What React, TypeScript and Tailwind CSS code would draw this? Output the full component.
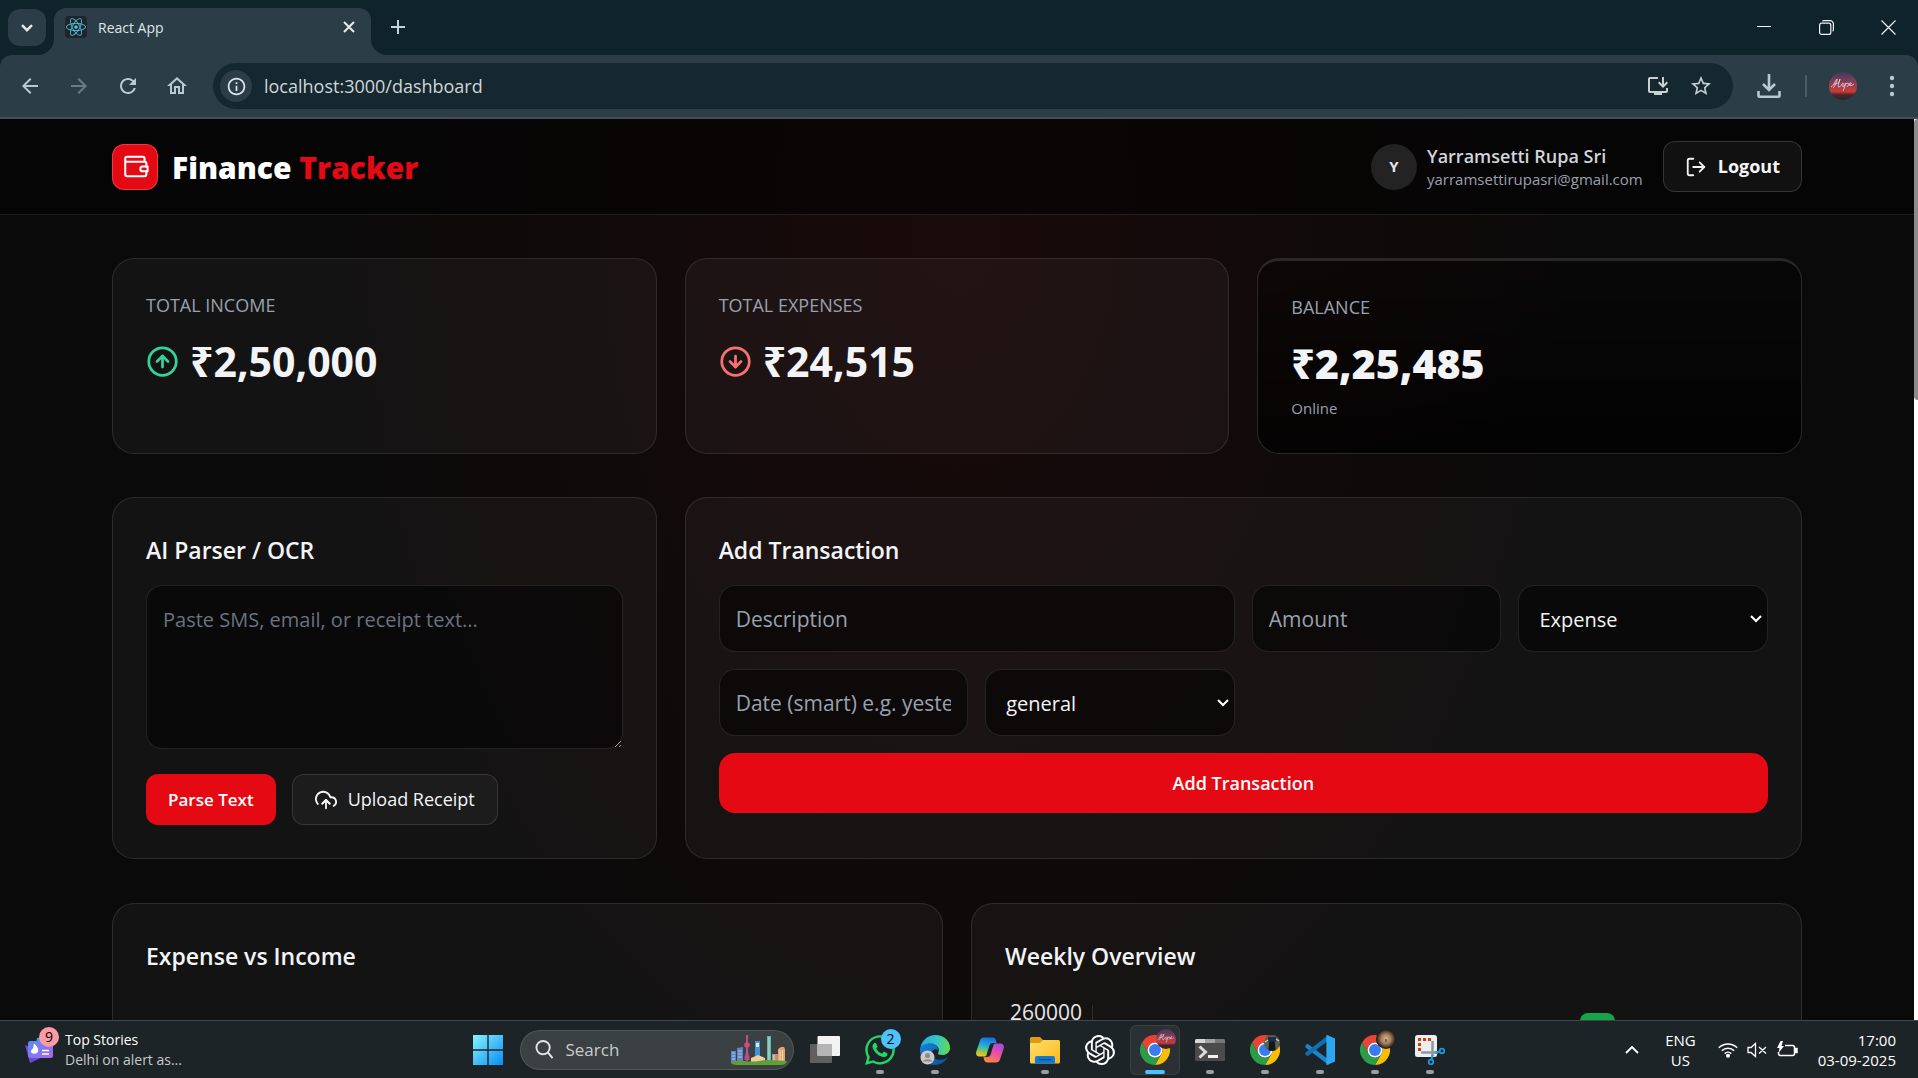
import type { ReactNode } from "react";
import { FiArrowDownCircle, FiArrowUpCircle, FiLogOut, FiUploadCloud } from "react-icons/fi";
import { FaReact, FaWhatsapp } from "react-icons/fa";
import { SiOpenai } from "react-icons/si";
import {
  MdArrowBack,
  MdArrowForward,
  MdOutlineHome,
  MdOutlineInfo,
  MdOutlineInstallDesktop,
  MdRefresh,
  MdStarBorder,
} from "react-icons/md";

/* ---------- Shared pieces ---------- */

function HopeAvatar({ className }: { className: string }) {
  return (
    <svg viewBox="0 0 28 28" className={className} aria-hidden="true">
      <defs>
        <linearGradient id="sunset" x1="0" y1="0" x2="0" y2="1">
          <stop offset="0" stopColor="#41395c" />
          <stop offset="0.4" stopColor="#8c3f57" />
          <stop offset="0.7" stopColor="#c63c38" />
          <stop offset="0.82" stopColor="#4a2328" />
          <stop offset="1" stopColor="#222b33" />
        </linearGradient>
      </defs>
      <circle cx="14" cy="14" r="14" fill="url(#sunset)" />
      <path
        d="M2 15c3-1 5-8 6-8s-3 9-4 9M5 12c3 0 5-1 6-5-1 4-3 8-1 8s3-4 4-4-1 4 0 4 3-4 2-4M17 11c-1 3-2 6-3 8M17 12c2-2 4 0 1 3M20 13c3-1 3-3 1-2s-1 5 4 1"
        fill="none"
        stroke="#f3d9de"
        strokeWidth="0.8"
      />
    </svg>
  );
}

/* ---------- Browser chrome ---------- */

function TabStrip() {
  return (
    <div className="flex h-[55px] shrink-0 items-end bg-[#0f232b]">
      <button
        aria-label="Search tabs"
        className="mb-[9px] ml-2 flex h-[37px] w-[38px] items-center justify-center rounded-xl bg-[#2b3e47] text-[#e3e8ea]"
      >
        <svg viewBox="0 0 12 8" className="h-2 w-3" fill="none" stroke="currentColor" strokeWidth="2.4">
          <path d="M1 1.2l5 5 5-5" />
        </svg>
      </button>
      <div className="relative ml-2 flex h-[47px] w-[317px] items-center rounded-t-xl bg-[#2b3e47] pb-[9px] pl-[11px] pr-3">
        <svg viewBox="0 0 16 16" className="absolute -left-4 bottom-0 size-4">
          <path d="M16 0v16H0A16 16 0 0 0 16 0z" fill="#2b3e47" />
        </svg>
        <svg viewBox="0 0 16 16" className="absolute -right-4 bottom-0 size-4">
          <path d="M0 0v16h16A16 16 0 0 1 0 0z" fill="#2b3e47" />
        </svg>
        <span className="flex size-[22px] items-center justify-center rounded-sm bg-[#20232a]">
          <FaReact className="size-5 text-[#53c1de]" />
        </span>
        <span className="ml-[11px] flex-1 text-[14px] text-[#dfe5e8]">React App</span>
        <button aria-label="Close tab" className="p-1 text-[#e6eaec]">
          <svg viewBox="0 0 12 12" className="size-3" fill="none" stroke="currentColor" strokeWidth="2">
            <path d="M1 1l10 10M11 1L1 11" />
          </svg>
        </button>
      </div>
      <button aria-label="New tab" className="mb-[21px] ml-5 text-[#c3d3da]">
        <svg viewBox="0 0 14 14" className="size-[14px]" fill="none" stroke="currentColor" strokeWidth="2">
          <path d="M7 0v14M0 7h14" />
        </svg>
      </button>
      <div className="mb-5 ml-auto mr-[22px] flex items-center gap-[47px] text-[#f0f3f4]">
        <button aria-label="Minimize">
          <svg viewBox="0 0 15 15" className="size-[15px]" fill="none" stroke="currentColor">
            <path d="M0 6.500h14" />
          </svg>
        </button>
        <button aria-label="Restore">
          <svg viewBox="0 0 15 15" className="size-[15px]" fill="none" stroke="currentColor" strokeWidth="1.2">
            <rect x="0.6" y="3.2" width="11.2" height="11.2" rx="2" />
            <path d="M3.4 1.2c.5-.4 1-.6 1.600-.6h6a3.400 3.400 0 0 1 3.400 3.400v5.500c0 .8-.3 1.400-.8 1.800" />
          </svg>
        </button>
        <button aria-label="Close window">
          <svg viewBox="0 0 15 15" className="size-[15px]" fill="none" stroke="currentColor" strokeWidth="1.2">
            <path d="M.5.5l14 14M14.500.5l-14 14" />
          </svg>
        </button>
      </div>
    </div>
  );
}

function Toolbar() {
  return (
    <div className="bg-[#0f232b]">
      <div className="flex h-[64px] shrink-0 items-center rounded-t-xl border-b-2 border-[#474d50] bg-[#2b3e47] pl-[18px] pr-[23px]">
        <div className="flex items-center gap-[25px] text-[#b5cad5]">
          <button aria-label="Back"><MdArrowBack className="size-6" /></button>
          <button aria-label="Forward" className="text-[#6b7b84]"><MdArrowForward className="size-6" /></button>
          <button aria-label="Reload"><MdRefresh className="size-6" /></button>
          <button aria-label="Home"><MdOutlineHome className="size-6" /></button>
        </div>
        <div className="ml-6 flex h-[46px] flex-1 items-center rounded-full bg-[#15282f] pl-[7px] pr-5">
          <button
            aria-label="Site information"
            className="flex size-8 items-center justify-center rounded-full bg-[#2b3e47] text-[#dfe6e9]"
          >
            <MdOutlineInfo className="size-[21px]" />
          </button>
          <input
            aria-label="Address"
            readOnly
            value="localhost:3000/dashboard"
            className="ml-3 min-w-0 flex-1 bg-transparent text-[18px] text-[#cfd5d8] outline-none"
          />
          <button aria-label="Install app" className="text-[#c9d0d3]"><MdOutlineInstallDesktop className="size-6" /></button>
          <button aria-label="Bookmark" className="ml-[19px] text-[#c9d0d3]"><MdStarBorder className="size-6" /></button>
        </div>
        <button aria-label="Downloads" className="ml-6 text-[#b5cad5]">
          <svg viewBox="0 0 24 24" className="size-6" fill="none" stroke="currentColor" strokeWidth="2.6">
            <path d="M12 0v15M6 10l6 6 6-6M1.500 17v4.500c0 .8.500 1.200 1.200 1.200h18.600c.7 0 1.200-.4 1.200-1.200V17" />
          </svg>
        </button>
        <span className="ml-6 h-[22px] w-0.5 bg-[#475c66]" />
        <button aria-label="Profile" className="ml-[22px]"><HopeAvatar className="size-7" /></button>
        <button aria-label="Menu" className="ml-8 text-[#b5cad5]">
          <svg viewBox="0 0 6 22" className="h-[22px] w-1.5" fill="currentColor">
            <circle cx="3" cy="3" r="2.200" />
            <circle cx="3" cy="11" r="2.200" />
            <circle cx="3" cy="19" r="2.200" />
          </svg>
        </button>
      </div>
    </div>
  );
}

/* ---------- Dashboard ---------- */

function AppHeader() {
  return (
    <header className="flex h-[96px] items-center justify-between border-b border-white/10 bg-black/50 px-28">
      <div className="flex items-center gap-[14px]">
        <span className="flex size-[46px] items-center justify-center rounded-xl border border-white/20 bg-[#e50914] text-white">
          <svg
            viewBox="0 0 24 24"
            className="size-[29px]"
            fill="none"
            stroke="currentColor"
            strokeWidth="1.700"
            strokeLinecap="round"
            strokeLinejoin="round"
          >
            <path d="M3.500 8V5.500c0-.8.700-1.500 1.500-1.500h13c.8 0 1.500.7 1.500 1.500V8zM3.500 6v12.500c0 .9.700 1.500 1.500 1.500h14.500c.9 0 1.500-.7 1.500-1.500V16M21 12V9.500c0-.9-.6-1.500-1.500-1.500" />
            <path d="M18 12a2 2 0 0 0 0 4h4v-4z" />
          </svg>
        </span>
        <h1 className="pt-0.5 text-[30px] font-extrabold text-white">
          Finance <span className="text-[#e50914]">Tracker</span>
        </h1>
      </div>
      <div className="flex items-center">
        <span className="flex size-[46px] items-center justify-center rounded-full bg-[#232323] text-[15px] font-bold text-gray-200">
          Y
        </span>
        <div className="ml-[10px] mr-5">
          <p className="text-[18px] font-semibold leading-6 text-gray-300">Yarramsetti Rupa Sri</p>
          <p className="text-[15px] leading-[22px] text-gray-400">yarramsettirupasri@gmail.com</p>
        </div>
        <button className="flex h-[51px] items-center gap-[11px] rounded-xl border border-white/15 bg-white/5 px-[21px] text-[18px] font-bold text-gray-100">
          <FiLogOut className="size-[22px]" />
          Logout
        </button>
      </div>
    </header>
  );
}

function Card({ className = "", children }: { className?: string; children: ReactNode }) {
  return (
    <section className={`rounded-[22px] border border-white/10 bg-white/4 p-[33px] ${className}`}>{children}</section>
  );
}

function StatLabel({ children }: { children: ReactNode }) {
  return <p className="text-[18px] leading-[26px] text-gray-400">{children}</p>;
}

function CardTitle({ children }: { children: ReactNode }) {
  return <h2 className="mb-4 text-[23px] font-semibold leading-[38px] text-gray-100">{children}</h2>;
}

function Stats() {
  return (
    <div className="grid grid-cols-3 gap-7">
      <Card>
        <StatLabel>TOTAL INCOME</StatLabel>
        <div className="mt-4 flex items-center gap-[11px]">
          <FiArrowUpCircle className="size-[33px] text-[#34d399]" />
          <p className="text-[41px] font-bold leading-[54px] text-gray-100">₹2,50,000</p>
        </div>
      </Card>
      <Card>
        <StatLabel>TOTAL EXPENSES</StatLabel>
        <div className="mt-4 flex items-center gap-[11px]">
          <FiArrowDownCircle className="size-[33px] text-[#f87171]" />
          <p className="text-[41px] font-bold leading-[54px] text-gray-100">₹24,515</p>
        </div>
      </Card>
      <section className="rounded-[22px] border border-t-[3px] border-white/12 bg-linear-to-b from-black/20 to-black/70 bg-clip-padding p-[33px]">
        <StatLabel>BALANCE</StatLabel>
        <p className="mt-4 text-[41px] font-extrabold leading-[54px] text-gray-100">₹2,25,485</p>
        <p className="mt-1.5 text-[15px] leading-6 text-gray-400">Online</p>
      </section>
    </div>
  );
}

function Parser() {
  return (
    <Card>
      <CardTitle>AI Parser / OCR</CardTitle>
      <textarea
        aria-label="Text to parse"
        placeholder="Paste SMS, email, or receipt text..."
        className="block h-[164px] w-full rounded-2xl border border-white/10 bg-black/50 px-4 py-[17px] text-[20px] leading-[33px] text-gray-100 outline-none placeholder:text-gray-500"
      />
      <div className="mt-[25px] flex gap-4">
        <button className="h-[51px] rounded-xl bg-[#e50914] px-[22px] text-[17px] font-semibold text-white">Parse Text</button>
        <button className="flex h-[51px] items-center gap-[11px] rounded-xl border border-white/12 bg-white/4 px-[22px] text-[18px] text-gray-100">
          <FiUploadCloud className="size-[22px]" />
          Upload Receipt
        </button>
      </div>
    </Card>
  );
}

const fieldClass =
  "h-[67px] w-full min-w-0 rounded-2xl border border-white/10 bg-black/50 px-4 text-gray-100 outline-none placeholder:text-gray-400";

function Select({ label, options }: { label: string; options: string[] }) {
  return (
    <div className="relative">
      <select aria-label={label} className={`${fieldClass} appearance-none pl-5 pt-0.5 text-[20px]`}>
        {options.map((o) => (
          <option key={o}>{o}</option>
        ))}
      </select>
      <svg
        viewBox="0 0 12 8"
        className="pointer-events-none absolute right-1.5 top-[30px] h-2 w-3 text-white"
        fill="none"
        stroke="currentColor"
        strokeWidth="2"
      >
        <path d="M1 1l5 5 5-5" />
      </svg>
    </div>
  );
}

function AddTransaction() {
  return (
    <Card className="col-span-2">
      <CardTitle>Add Transaction</CardTitle>
      <form className="grid grid-cols-4 gap-x-[17px] gap-y-[17px]" onSubmit={(e) => e.preventDefault()}>
        <input aria-label="Description" placeholder="Description" className={`${fieldClass} col-span-2 text-[21px]`} />
        <input aria-label="Amount" placeholder="Amount" className={`${fieldClass} text-[21px]`} />
        <Select label="Type" options={["Expense", "Income"]} />
        <input aria-label="Date" placeholder="Date (smart) e.g. yesterday" className={`${fieldClass} text-[21px]`} />
        <Select label="Category" options={["general", "food", "travel"]} />
        <button className="col-span-4 h-[60px] rounded-2xl bg-[#e50914] text-[18px] font-semibold text-white">
          Add Transaction
        </button>
      </form>
    </Card>
  );
}

function Charts() {
  return (
    <div className="grid grid-cols-2 gap-7">
      <Card className="min-h-[480px]">
        <CardTitle>Expense vs Income</CardTitle>
      </Card>
      <Card className="min-h-[480px]">
        <CardTitle>Weekly Overview</CardTitle>
        <svg width="763" height="340" aria-label="Weekly overview chart">
          <text x="77" y="29" textAnchor="end" fontSize="21" fill="#e5e7eb">260000</text>
          <path d="M87.500 14v300" stroke="#2c2c2c" />
          <rect x="575" y="22" width="35" height="292" rx="8" fill="#16a34a" />
        </svg>
      </Card>
    </div>
  );
}

function Dashboard() {
  return (
    <div className="flex min-h-0 flex-1 bg-[#0a0a0a]">
      <main className="min-w-0 flex-1 overflow-hidden bg-[radial-gradient(ellipse_660px_980px_at_50%_110px,rgba(229,9,20,0.07),transparent)]">
        <AppHeader />
        <div className="flex flex-col gap-11 px-28 pt-[43px]">
          <Stats />
          <div className="-mt-px grid grid-cols-3 gap-7">
            <Parser />
            <AddTransaction />
          </div>
          <Charts />
        </div>
      </main>
      <div className="w-1 bg-white">
        <div className="h-[281px] rounded-l-sm bg-[#8b8b8b]" />
      </div>
    </div>
  );
}

/* ---------- Taskbar drawings ---------- */

function ChromeLogo() {
  return (
    <svg viewBox="0 0 48 48" className="size-[30px]">
      <path d="M24 12h20.800A24 24 0 0 0 3.200 12l10.400 18A12 12 0 0 1 24 12z" fill="#ea4335" />
      <path d="M44.800 12H24a12 12 0 0 1 10.400 18L24 48A24 24 0 0 0 44.800 12z" fill="#fbbc05" />
      <path d="M3.200 12A24 24 0 0 0 24 48l10.400-18a12 12 0 0 1-20.800 0z" fill="#2a9d48" />
      <circle cx="24" cy="24" r="12" fill="#fff" />
      <circle cx="24" cy="24" r="9.500" fill="#3b7bf0" />
    </svg>
  );
}

function EdgeLogo() {
  return (
    <svg viewBox="0 0 30 30" className="size-[30px]">
      <defs>
        <linearGradient id="edgeTop" x1="0" y1="0.3" x2="1" y2="0.4">
          <stop offset="0" stopColor="#2aa5e0" />
          <stop offset="0.55" stopColor="#35c6c8" />
          <stop offset="1" stopColor="#5fdc4f" />
        </linearGradient>
        <linearGradient id="edgeLow" x1="0" y1="0" x2="1" y2="1">
          <stop offset="0" stopColor="#1582d8" />
          <stop offset="1" stopColor="#0c4f9e" />
        </linearGradient>
      </defs>
      <path d="M0 15C0 8 5 8.500 10 8.500c5 0 8 3 8 6.500-4-2-7 1-6 5 1 5 9 7 16 2-3 5-8 8-13 8C6 30 0 23 0 15z" fill="url(#edgeLow)" />
      <path d="M0.500 12C2 5 8 0 15 0c9 0 15 6 15 12.500C30 18 26 20 22.500 20c-3.500 0-5-1-4.300-2.300C20.500 14 17 8.500 10.500 8.500 6 8.500 2 10 0.500 12z" fill="url(#edgeTop)" />
      <circle cx="7.500" cy="22.500" r="7" fill="#c9c9c9" />
      <circle cx="7.500" cy="20.500" r="2.600" fill="#8c8c8c" />
      <path d="M3 26.500c.5-3 8.500-3 9 0z" fill="#8c8c8c" />
    </svg>
  );
}

function CopilotLogo() {
  return (
    <svg viewBox="0 0 30 30" className="size-[30px]">
      <defs>
        <linearGradient id="copA" x1="0.500" y1="0" x2="0.300" y2="1">
          <stop offset="0" stopColor="#1a6fe0" />
          <stop offset="0.45" stopColor="#22b2d6" />
          <stop offset="0.75" stopColor="#8fc94a" />
          <stop offset="1" stopColor="#f3c623" />
        </linearGradient>
        <linearGradient id="copB" x1="0.700" y1="0" x2="0.300" y2="1">
          <stop offset="0" stopColor="#a64be0" />
          <stop offset="0.5" stopColor="#ee4fa0" />
          <stop offset="1" stopColor="#fb8a3c" />
        </linearGradient>
      </defs>
      <path d="M9 2.500h8.500c2 0 2.800 1 3.300 2.500l.8 3H18c-2 0-3 .8-3.600 2.500L11.500 20c-.3 1-1 1.500-2 1.500H5c-3 0-4.500-2-3.700-5L5 5.500c.6-2 2-3 4-3z" fill="url(#copA)" />
      <path d="M21 27.500h-8.500c-2 0-2.800-1-3.300-2.500l-.8-3H12c2 0 3-.8 3.600-2.500L18.500 10c.3-1 1-1.500 2-1.500H25c3 0 4.500 2 3.700 5L25 24.500c-.6 2-2 3-4 3z" fill="url(#copB)" />
    </svg>
  );
}

function ExplorerLogo() {
  return (
    <svg viewBox="0 0 30 30" className="size-[30px]">
      <defs>
        <linearGradient id="folder" x1="0" y1="0" x2="1" y2="1">
          <stop offset="0" stopColor="#ffdf6d" />
          <stop offset="1" stopColor="#fbb919" />
        </linearGradient>
      </defs>
      <path d="M0 3.500A1.500 1.500 0 0 1 1.500 2H10l3 3H27v8H0z" fill="#e09a10" />
      <path d="M0 8h10l3-3h15.500A1.500 1.500 0 0 1 30 6.500v20.500a1.500 1.500 0 0 1-1.500 1.500h-27A1.500 1.500 0 0 1 0 27z" fill="url(#folder)" />
      <path d="M5 28.500V23a2 2 0 0 1 2-2h16a2 2 0 0 1 2 2v5.500z" fill="#1079d0" />
      <path d="M9 24.700h12" stroke="#0a4f93" strokeWidth="1.200" />
    </svg>
  );
}

function TerminalLogo() {
  return (
    <svg viewBox="0 0 30 30" className="size-[30px]">
      <rect y="4" width="30" height="22" rx="1.500" fill="#4b4b4b" />
      <path d="M1.500 4H10v4H0V5.500A1.500 1.500 0 0 1 1.500 4z" fill="#d6d6d6" />
      <path d="M10 4h10v4H10z" fill="#a3a3a3" />
      <path d="M20 4h8.500A1.500 1.500 0 0 1 30 5.500V8H20z" fill="#787878" />
      <path d="M4.500 11.500l6 5.500-6 5.500" fill="none" stroke="#dcdcdc" strokeWidth="3" />
      <rect x="13" y="20" width="10" height="3" fill="#f2f2f2" />
    </svg>
  );
}

function VsCodeLogo() {
  return (
    <svg viewBox="0 0 30 30" className="size-[30px]">
      <path d="M0.500 10.500l2-1.700 21 15.700V30L0.500 12.500z" fill="#1a86cf" />
      <path d="M0.500 19.500l2 1.700 21-15.700V0L0.500 17.500z" fill="#0e6fb5" />
      <path d="M22 0l8 3.500v23L22 30c-.6 0-.6 0-.6-.5V.5c0-.5 0-.5.600-.5z" fill="#2aa9f2" />
    </svg>
  );
}

function SnipLogo() {
  return (
    <svg viewBox="0 0 30 30" className="size-[30px]">
      <rect width="22" height="22" rx="2.500" fill="#eceff1" />
      <path d="M4.500 16V4.500H17" fill="none" stroke="#d83b01" strokeWidth="3" strokeDasharray="3 2" />
      <path d="M17.500 6v15M6 17.500h17" stroke="#8f989e" strokeWidth="2.500" />
      <circle cx="27" cy="16" r="2.300" fill="none" stroke="#1a9ae0" strokeWidth="1.800" />
      <circle cx="16" cy="27" r="2.300" fill="none" stroke="#1a9ae0" strokeWidth="1.800" />
      <path d="M20 17.500l5-1M17.500 20l-1 5" stroke="#1a9ae0" strokeWidth="2" />
    </svg>
  );
}

function TaskViewLogo() {
  return (
    <svg viewBox="0 0 30 30" className="size-[30px]">
      <rect y="9" width="22" height="19" rx="1" fill="#606060" />
      <rect x="7.500" y="1" width="22.500" height="20" rx="1" fill="#f3f3f3" />
      <path d="M7.500 9H22v12H8.500a1 1 0 0 1-1-1z" fill="#b5b5b5" />
    </svg>
  );
}

function Skyline() {
  return (
    <svg viewBox="0 0 56 32" className="h-8 w-14" aria-hidden="true">
      <path d="M0 17h5v12H0zM6 14l6-1v16H6z" fill="#5f83c4" />
      <path d="M1 19h3M1 22h3M1 25h3M7 17h4M7 20h4M7 23h4" stroke="#a9d0ee" />
      <path d="M24 7h5v22h-5z" fill="#3f93d6" />
      <path d="M25 9h3v4h-3z" fill="#d5ecfa" />
      <path d="M36 2h4v27h-4z" fill="#5fb5b0" />
      <path d="M38 3v24" stroke="#bce6e0" />
      <path d="M16 1v26" stroke="#d65f9b" strokeWidth="1.500" />
      <circle cx="16" cy="11" r="2.800" fill="#d6487f" />
      <path d="M13.500 26l2.500-15 2.500 15z" fill="#a9588f" />
      <circle cx="16" cy="23" r="2.500" fill="#c2477c" />
      <path d="M47 15l3-2h3l1 2v14h-7z" fill="#e3a26a" />
      <path d="M49 16v11M51.500 16v11" stroke="#f7dcb8" />
      <path d="M20 24l7-3 7 3v6H20z" fill="#edcf9e" />
      <path d="M41 20h6v9h-6z" fill="#b98f7b" />
      <path d="M43 21v7" stroke="#f3e1cc" />
      <path d="M0 28c10-3 18 1 28-1s20 0 28 0c-1 3-3 4-6 4H6c-4 0-6-1-6-3z" fill="#5f9f34" />
    </svg>
  );
}

function Photo({ kind }: { kind: "hope" | "street" | "face" }) {
  if (kind === "hope") return <HopeAvatar className="absolute -right-1.5 -top-1.5 size-5" />;
  if (kind === "street")
    return (
      <svg viewBox="0 0 16 16" className="absolute right-0 top-0 size-4">
        <circle cx="8" cy="8" r="8" fill="#59604f" />
        <path d="M4 2h8v5H4z" fill="#1f2c44" />
        <path d="M5 8c0-2 6-2 6 0l.5 7a8 8 0 0 1-7 0z" fill="#14151a" />
        <path d="M1 7l3-2M12 4l3 2" stroke="#c9c4b4" strokeWidth="1.500" />
      </svg>
    );
  return (
    <svg viewBox="0 0 20 20" className="absolute -right-1.5 -top-1.5 size-5">
      <defs>
        <radialGradient id="face">
          <stop offset="0" stopColor="#d9b48d" />
          <stop offset="0.5" stopColor="#a07c5c" />
          <stop offset="1" stopColor="#15100d" />
        </radialGradient>
      </defs>
      <circle cx="10" cy="10" r="10" fill="url(#face)" />
      <path d="M10 10v3" stroke="#7b3f35" strokeWidth="1.500" />
    </svg>
  );
}

function TaskButton({
  label,
  running = false,
  active = false,
  children,
}: {
  label: string;
  running?: boolean;
  active?: boolean;
  children: ReactNode;
}) {
  return (
    <button
      aria-label={label}
      className={`relative flex h-[50px] w-[50px] items-center justify-center rounded-md ${
        active ? "border border-white/8 bg-white/6" : ""
      }`}
    >
      <span className="relative">{children}</span>
      {active ? (
        <span className="absolute inset-x-[14px] bottom-0 h-1 rounded-full bg-[#4cc2ff]" />
      ) : running ? (
        <span className="absolute inset-x-[21px] bottom-px h-1 rounded-full bg-[#9c9fa0]" />
      ) : null}
    </button>
  );
}

function Tray() {
  return (
    <div className="flex flex-1 items-center justify-end pr-[22px] text-white">
      <button aria-label="Show hidden icons">
        <svg viewBox="0 0 14 8" className="h-2 w-[14px]" fill="none" stroke="currentColor" strokeWidth="1.800">
          <path d="M1 7l6-6 6 6" />
        </svg>
      </button>
      <div className="ml-[26px] text-center text-[15px] leading-5">
        <p>ENG</p>
        <p>US</p>
      </div>
      <div className="ml-[22px] flex items-center gap-[9px]">
        <svg viewBox="0 0 20 16" className="h-4 w-5" fill="none" stroke="currentColor" strokeWidth="1.500">
          <path d="M.8 5.800a13 13 0 0 1 18.400 0M3.800 8.800a8.800 8.800 0 0 1 12.400 0M6.700 11.600a4.700 4.700 0 0 1 6.600 0" />
          <circle cx="10" cy="13.800" r="1.300" fill="currentColor" />
        </svg>
        <svg viewBox="0 0 20 16" className="h-4 w-5" fill="none" stroke="currentColor" strokeWidth="1.300">
          <path d="M1 5.500v5h3l4.500 4V1.500L4 5.500zM12 5l7 6.500M19 5l-7 6.500" />
        </svg>
        <svg viewBox="0 0 22 18" className="h-[18px] w-[22px]" fill="none" stroke="currentColor" strokeWidth="1.500">
          <path d="M9 4.500h7.500a2 2 0 0 1 2 2v6a2 2 0 0 1-2 2h-12a2 2 0 0 1-2-2V11" />
          <path d="M19.500 7.500H21v4h-1.500z" fill="currentColor" />
          <path d="M4.500 0L1 7h2.500L2.500 12 8 5H5.500L7 0z" fill="currentColor" stroke="none" />
        </svg>
      </div>
      <div className="ml-5 text-right text-[15px] leading-5">
        <p>17:00</p>
        <p>03-09-2025</p>
      </div>
    </div>
  );
}

function Taskbar() {
  return (
    <footer className="flex h-[58px] shrink-0 items-center border-t border-[#414647] bg-[#1d2427]">
      <div className="flex flex-1 items-center pl-[25px]">
        <div className="relative">
          <svg viewBox="0 0 28 28" className="size-7">
            <defs>
              <linearGradient id="widget" x1="0" y1="0" x2="1" y2="1">
                <stop offset="0" stopColor="#5b8cf5" />
                <stop offset="1" stopColor="#a566f2" />
              </linearGradient>
            </defs>
            <path d="M12 2l12-2v12H10z" fill="#2fa8c4" />
            <path d="M0 9l22 10-17 8z" fill="#6b4bd0" />
            <rect x="3" y="5" width="25" height="17" rx="2.500" fill="url(#widget)" />
            <path d="M9 7.500c3 3 5 5 4 8s-7 3-7 0c0-2 1.500-2 2-3.500.7-1.500.3-3 1-4.500z" fill="#fff" />
            <path d="M17 14.500h7M17 18h7" stroke="#fff" strokeWidth="1.500" />
          </svg>
          <span className="absolute -right-[6px] -top-[9px] flex size-5 items-center justify-center rounded-full bg-[#ff99a4] text-[14px] text-black">
            9
          </span>
        </div>
        <div className="ml-3 text-[14px] leading-5">
          <p className="text-white">Top Stories</p>
          <p className="text-[#c5c9ca]">Delhi on alert as...</p>
        </div>
      </div>
      <div className="ml-1.5 flex items-center gap-[5px]">
        <button aria-label="Start" className="mr-3">
          <svg viewBox="0 0 30 30" className="size-[30px]">
            <defs>
              <linearGradient id="win" x1="0" y1="0" x2="1" y2="1">
                <stop offset="0" stopColor="#86f3ff" />
                <stop offset="1" stopColor="#0a8cf5" />
              </linearGradient>
            </defs>
            <path d="M0 0h14.300v14.300H0zM15.700 0H30v14.300H15.700zM0 15.700h14.300V30H0zM15.700 15.700H30V30H15.700z" fill="url(#win)" />
          </svg>
        </button>
        <label className="mr-px flex h-10 w-[274px] items-center rounded-full border border-white/12 bg-[#3b4042] pl-[14px] pr-[6px]">
          <svg viewBox="0 0 20 20" className="size-[19px] text-[#e4e6e7]" fill="none" stroke="currentColor" strokeWidth="2">
            <circle cx="8.500" cy="8" r="7" />
            <path d="M13.500 13l5 6" />
          </svg>
          <input
            aria-label="Search"
            placeholder="Search"
            className="ml-3 min-w-0 flex-1 bg-transparent text-[17px] outline-none placeholder:text-[#c9cccd]"
          />
          <Skyline />
        </label>
        <TaskButton label="Task view"><TaskViewLogo /></TaskButton>
        <TaskButton label="WhatsApp" running>
          <FaWhatsapp className="size-[34px] text-[#25d366]" />
          <span className="absolute -right-1 -top-1 flex size-5 items-center justify-center rounded-full bg-[#4cc2ff] text-[14px] text-black">
            2
          </span>
        </TaskButton>
        <TaskButton label="Edge" running><EdgeLogo /></TaskButton>
        <TaskButton label="Copilot"><CopilotLogo /></TaskButton>
        <TaskButton label="File Explorer" running><ExplorerLogo /></TaskButton>
        <TaskButton label="ChatGPT"><SiOpenai className="size-[30px] text-white" /></TaskButton>
        <TaskButton label="Chrome" active>
          <ChromeLogo />
          <Photo kind="hope" />
        </TaskButton>
        <TaskButton label="Terminal" running><TerminalLogo /></TaskButton>
        <TaskButton label="Chrome, second profile" running>
          <ChromeLogo />
          <Photo kind="street" />
        </TaskButton>
        <TaskButton label="Visual Studio Code" running><VsCodeLogo /></TaskButton>
        <TaskButton label="Chrome, third profile" running>
          <ChromeLogo />
          <Photo kind="face" />
        </TaskButton>
        <TaskButton label="Snipping Tool" running><SnipLogo /></TaskButton>
      </div>
      <Tray />
    </footer>
  );
}

export default function App() {
  return (
    <div className="flex h-screen flex-col overflow-hidden bg-[#0a0a0a] font-['Open_Sans','Noto_Sans',sans-serif]">
      <TabStrip />
      <Toolbar />
      <Dashboard />
      <Taskbar />
    </div>
  );
}
